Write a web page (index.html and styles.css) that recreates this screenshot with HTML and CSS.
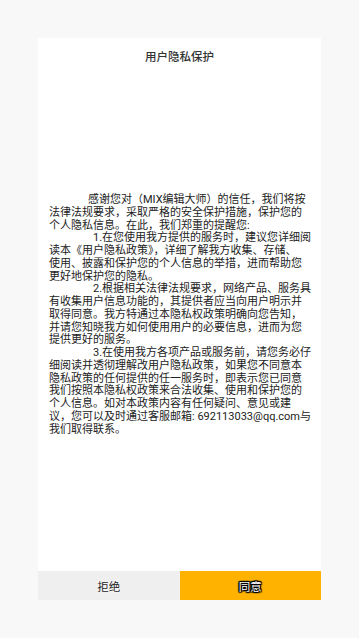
FILE: index.html
```html
<!DOCTYPE html>
<html>
<head>
    <title>用户隐私保护</title>
    <meta charset="utf-8">
    <meta name="viewport" content="width=device-width, initial-scale=1.0" />
    <link rel="stylesheet" href="styles.css">
</head>
<body>
    <div class="dialog">
        <div class="title">用户隐私保护</div>
        <div class="content">
            <p class="para first">感谢您对（MIX编辑大师）的信任，我们将按<br>法律法规要求，采取严格的安全保护措施，保护您的<br>个人隐私信息。在此，我们郑重的提醒您:</p>
            <p class="para num">1.在您使用我方提供的服务时，建议您详细阅<br>读本《用户隐私政策》，详细了解我方收集、存储、<br>使用、披露和保护您的个人信息的举措，进而帮助您<br>更好地保护您的隐私。</p>
            <p class="para num">2.根据相关法律法规要求，网络产品、服务具<br>有收集用户信息功能的，其提供者应当向用户明示并<br>取得同意。我方特通过本隐私权政策明确向您告知，<br>并请您知晓我方如何使用用户的必要信息，进而为您<br>提供更好的服务。</p>
            <p class="para num">3.在使用我方各项产品或服务前，请您务必仔<br>细阅读并透彻理解改用户隐私政策，如果您不同意本<br>隐私政策的任何提供的任一服务时，即表示您已同意<br>我们按照本隐私权政策来合法收集、使用和保护您的<br>个人信息。如对本政策内容有任何疑问、意见或建<br>议，您可以及时通过客服邮箱: 692113033@qq.com与<br>我们取得联系。</p>
        </div>
        <div class="buttons">
            <div class="button refuse">拒绝</div>
            <div class="button agree">同意</div>
        </div>
    </div>
</body>
</html>
```

FILE: styles.css
```css
* {
    box-sizing: border-box;
    margin: 0px;
    padding: 0px;
}

body {
    background-color: #f8f8f8;
    font-family: Roboto, "Noto Sans CJK SC", sans-serif;
    color: #222222;
    padding: 38px 38px 0px 38px;
}

.dialog {
    background-color: #ffffff;
    width: 283px;
    height: 562px;
    display: flex;
    flex-direction: column;
}

.title {
    height: 38px;
    font-size: 11.5px;
    font-weight: 500;
    line-height: 38px;
    text-align: center;
    color: #333333;
}

.content {
    flex: 1;
    padding: 118px 11px 0px 11px;
    font-size: 11px;
    line-height: 12.75px;
    white-space: nowrap;
}

.para.first {
    text-indent: 39px;
}

.para.num {
    text-indent: 44px;
}

.buttons {
    display: flex;
    height: 29px;
}

.button {
    flex: 1;
    display: flex;
    align-items: center;
    justify-content: center;
    font-size: 11.5px;
}

.refuse {
    background-color: #efefef;
    color: #222222;
    text-shadow: 0 0 2px #ffffff, 0 0 2px #ffffff;
}

.agree {
    background-color: #ffb300;
    color: #ffffff;
    text-shadow: 1px 0 1px #000, -1px 0 1px #000, 0 1px 1px #000, 0 -1px 1px #000, 1px 1px 1px #000, -1px -1px 1px #000, 1px -1px 1px #000, -1px 1px 1px #000;
}
```
